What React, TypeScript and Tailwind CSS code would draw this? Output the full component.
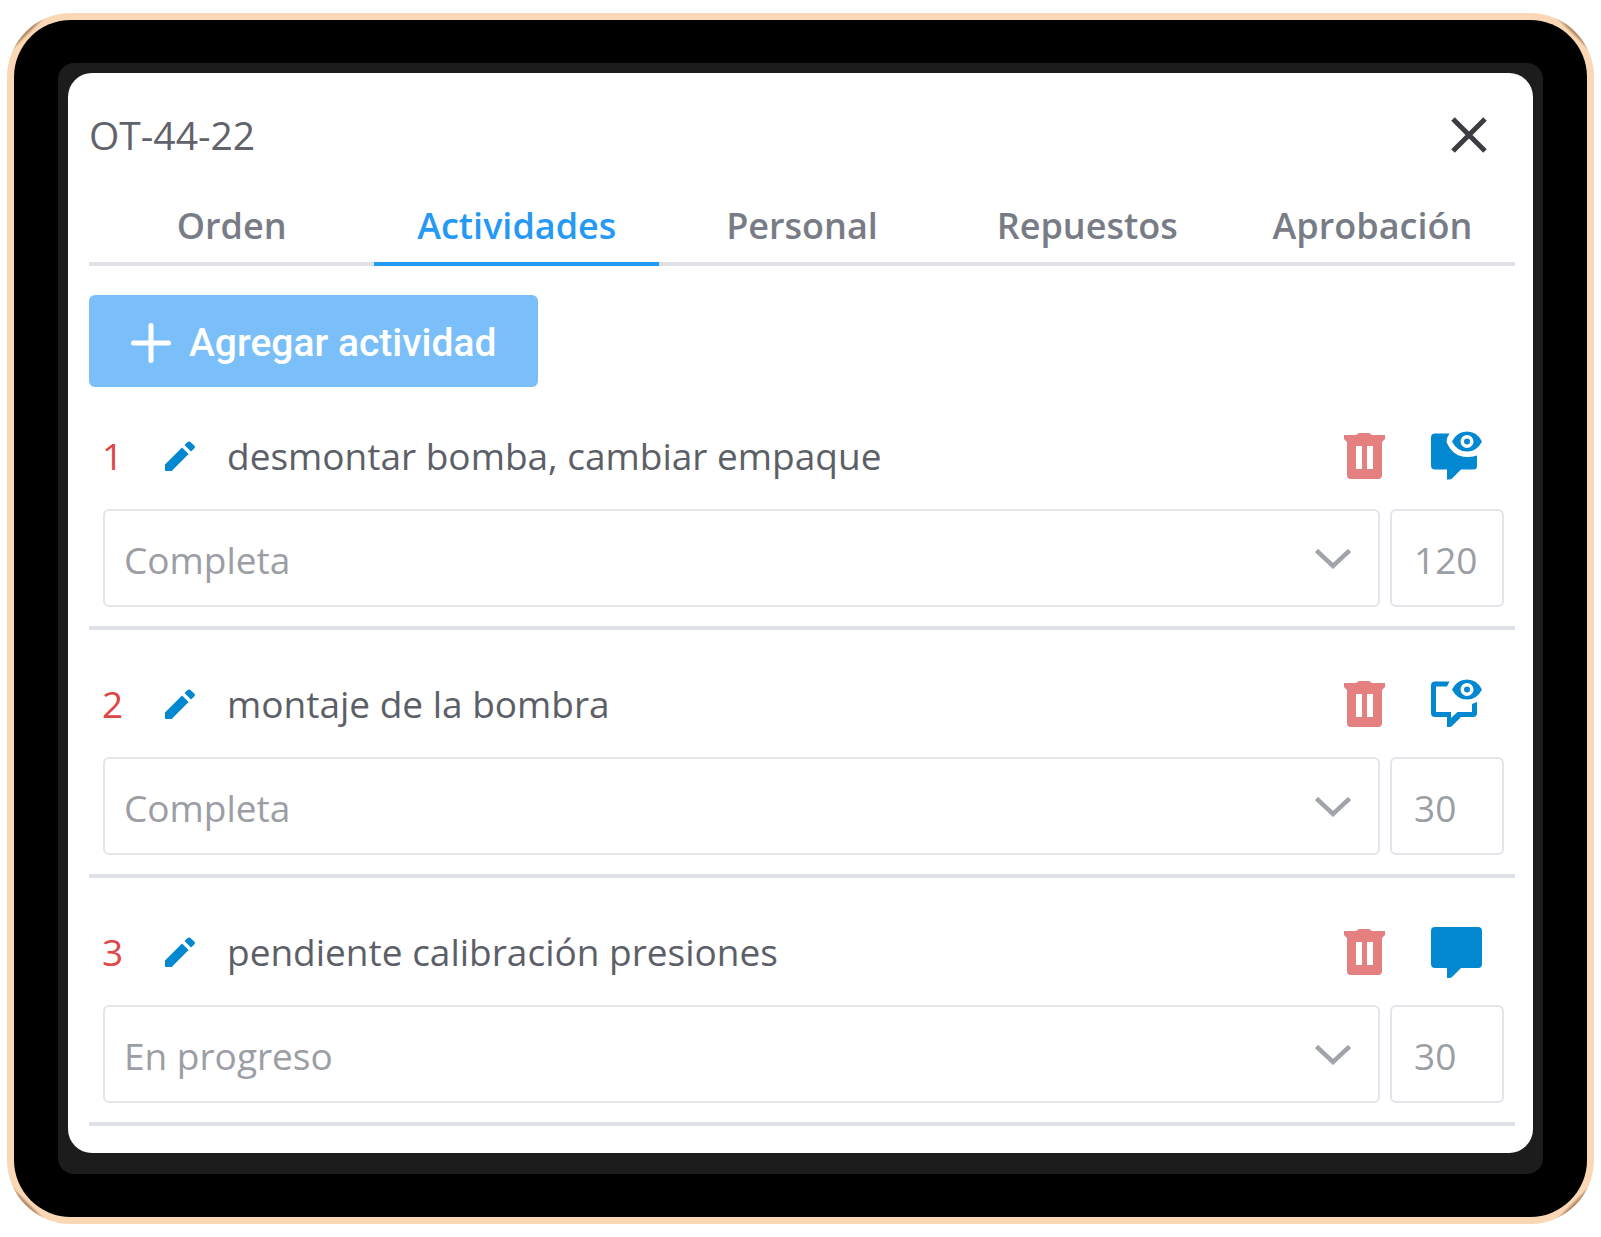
import { useState } from "react";

type Note = "filled-eye" | "outline-eye" | "filled";

type Activity = {
  id: number;
  description: string;
  status: string;
  minutes: number;
  note: Note;
};

const TABS = ["Orden", "Actividades", "Personal", "Repuestos", "Aprobación"];
const STATUSES = ["Pendiente", "En progreso", "Completa"];

const ACTIVITIES: Activity[] = [
  { id: 1, description: "desmontar bomba, cambiar empaque", status: "Completa", minutes: 120, note: "filled-eye" },
  { id: 2, description: "montaje de la bombra", status: "Completa", minutes: 30, note: "outline-eye" },
  { id: 3, description: "pendiente calibración presiones", status: "En progreso", minutes: 30, note: "filled" },
];

function CloseIcon() {
  return (
    <svg viewBox="0 0 36 36" className="size-9" fill="none" stroke="#3b3d42" strokeWidth="5">
      <path d="M2 2 34 34M34 2 2 34" />
    </svg>
  );
}

function PlusIcon() {
  return (
    <svg viewBox="0 0 40 40" className="size-10" fill="none" stroke="currentColor" strokeWidth="5" strokeLinecap="round">
      <path d="M20 2.5v35M2.5 20h35" />
    </svg>
  );
}

function PencilIcon() {
  return (
    <svg viewBox="0 0 30 30" className="size-[30px]" fill="#0288d1">
      <path d="M0 23.6 17 6.4 23.6 13 6.6 30H0.8Q0 30 0 29.2ZM19.5 4 22.6 1Q24 -0.2 25.4 1L29.3 4.6Q30.5 6 29.3 7.4L26 10.5Z" />
    </svg>
  );
}

function TrashIcon() {
  return (
    <svg viewBox="0 0 42 46" className="h-[46px] w-[42px]" fill="#e58080">
      <path
        fillRule="evenodd"
        d="M16 0H26L29 2H42V6L39 9V42Q39 46 35 46H8Q4 46 4 42V9L1 6V2H13ZM13 13V36H19V13ZM24 13V36H30V13Z"
      />
    </svg>
  );
}

function Eye() {
  return (
    <path
      fillRule="evenodd"
      d="M21 10.5Q26 0.5 36 0.5T51 10.5Q46 20.5 36 20.5T21 10.5ZM36 4A6.5 6.5 0 1 0 36 17A6.5 6.5 0 1 0 36 4ZM36 7.5A3 3 0 1 1 36 13.5A3 3 0 1 1 36 7.5Z"
    />
  );
}

function NoteIcon({ note }: { note: Note }) {
  return (
    <svg viewBox="0 0 51 51" className="size-[51px]" fill="#0288d1">
      {note === "filled" && (
        <path d="M4 0H47Q51 0 51 4V37Q51 41 47 41H30L21 50Q20 51 18 51H16V41H4Q0 41 0 37V4Q0 0 4 0Z" />
      )}
      {note === "filled-eye" && (
        <>
          <path d="M4 2.5H18.5Q15.5 6.5 15.5 11Q22 26 36 26Q41 26 46 24.5V35Q46 38.5 42.5 38.5H30L21 47.5Q20 48.5 18 48.5H16V38.5H4Q0 38.5 0 34.5V6.5Q0 2.5 4 2.5Z" />
          <Eye />
        </>
      )}
      {note === "outline-eye" && (
        <>
          <path d="M4 2.5H18.5L16 7.5H5V33H20V39L26.5 33H41V25L46 23V34Q46 38 42 38H30L21 47Q20 48 18 48H16V38H4Q0 38 0 34V6.5Q0 2.5 4 2.5Z" />
          <Eye />
        </>
      )}
    </svg>
  );
}

function ActivityItem({ activity }: { activity: Activity }) {
  const [status, setStatus] = useState(activity.status);
  const [minutes, setMinutes] = useState(activity.minutes);

  return (
    <li className="border-b-4 border-[#dee2e8] pb-[19px]">
      <div className="flex h-12 items-center pr-[33px] pl-[13px]">
        <span className="w-[63px] text-[#e04646]">{activity.id}</span>
        <button type="button" aria-label="Editar actividad" className="shrink-0">
          <PencilIcon />
        </button>
        <p className="ml-8 flex-1 whitespace-nowrap text-[#5c5f67]">{activity.description}</p>
        <button type="button" aria-label="Eliminar actividad" className="shrink-0">
          <TrashIcon />
        </button>
        <button type="button" aria-label="Ver comentarios" className="ml-[46px] shrink-0">
          <NoteIcon note={activity.note} />
        </button>
      </div>
      <div className="mt-[29px] flex gap-[10px] pr-[11px] pl-[14px]">
        <div className="relative flex-1">
          <select
            aria-label={`Estado de la actividad ${activity.id}`}
            value={status}
            onChange={(e) => setStatus(e.target.value)}
            className="h-[98px] w-full appearance-none rounded-md border-2 border-[#e3e5ea] bg-white px-[19px] pt-1 text-[#9b9ea4]"
          >
            {STATUSES.map((s) => (
              <option key={s}>{s}</option>
            ))}
          </select>
          <svg
            viewBox="0 0 36 20"
            className="pointer-events-none absolute top-10 right-[29px] h-5 w-9"
            fill="none"
            stroke="#a0a4ab"
            strokeWidth="4.5"
          >
            <path d="M1.5 1.5 18 17 34.5 1.5" />
          </svg>
        </div>
        <input
          type="text"
          inputMode="numeric"
          aria-label={`Minutos de la actividad ${activity.id}`}
          value={minutes}
          onChange={(e) => setMinutes(Number(e.target.value) || 0)}
          className="h-[98px] w-[114px] rounded-md border-2 border-[#e3e5ea] bg-white pt-0.5 pl-[22px] text-[#9b9ea4]"
        />
      </div>
    </li>
  );
}

export default function App() {
  const [tab, setTab] = useState("Actividades");

  return (
    <div className="min-h-screen bg-white px-[7px] py-[13px] font-['Open_Sans','Noto_Sans',sans-serif] text-[37px] leading-[48px]">
      <div className="rounded-[64px] bg-[#fbd8b5] bg-[linear-gradient(135deg,#b88c68_28px,transparent_31px),linear-gradient(225deg,#b88c68_28px,transparent_31px),linear-gradient(45deg,#b88c68_28px,transparent_31px),linear-gradient(315deg,#b88c68_28px,transparent_31px)] p-[7px]">
        <div className="rounded-[57px] bg-black px-11 py-[43px]">
          <div className="rounded-2xl bg-[#1c1c1c] px-[10px] pt-[10px] pb-[21px]">
            <main className="rounded-3xl bg-white pt-[38px] pr-[18px] pb-[27px] pl-[21px]">
              <header className="flex items-center justify-between pr-7">
                <h1 className="text-[39px] text-[#60636b]">OT-44-22</h1>
                <button type="button" aria-label="Cerrar">
                  <CloseIcon />
                </button>
              </header>

              <div role="tablist" className="mt-[27px] grid grid-cols-5">
                {TABS.map((name) => (
                  <button
                    key={name}
                    type="button"
                    role="tab"
                    aria-selected={name === tab}
                    onClick={() => setTab(name)}
                    className={
                      name === tab
                        ? "h-20 border-b-4 border-[#2699f5] pt-1 text-[36px] font-semibold text-[#2699f5]"
                        : "h-20 border-b-4 border-[#dee2e8] pt-1 text-[36px] font-semibold text-[#777c86]"
                    }
                  >
                    {name}
                  </button>
                ))}
              </div>

              <button
                type="button"
                className="mt-[29px] flex h-[92px] items-center gap-[18px] rounded-md bg-[#7abffa] px-[42px] pt-1 font-['Roboto',sans-serif] text-[39px] font-medium text-white"
              >
                <PlusIcon />
                Agregar actividad
              </button>

              <ul className="mt-[45px] flex flex-col gap-[50px]">
                {ACTIVITIES.map((activity) => (
                  <ActivityItem key={activity.id} activity={activity} />
                ))}
              </ul>
            </main>
          </div>
        </div>
      </div>
    </div>
  );
}
